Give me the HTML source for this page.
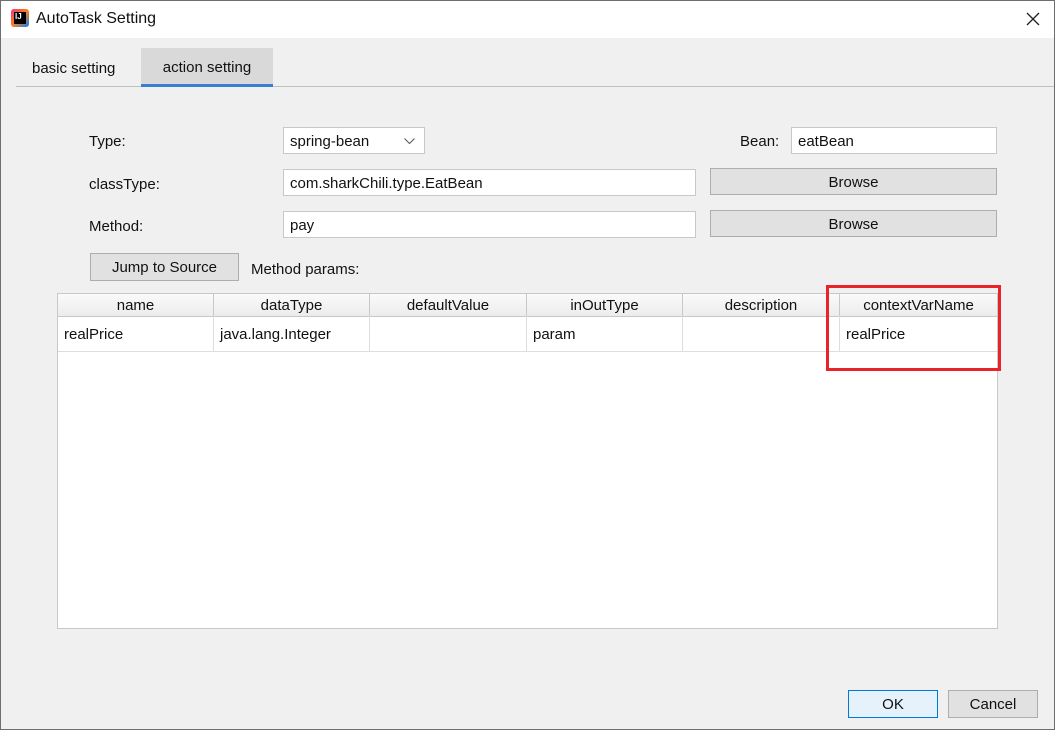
<!DOCTYPE html><html><head><style>
*{margin:0;padding:0;box-sizing:border-box}
body{width:1055px;height:730px;position:relative;background:#f0f0f0;font-family:"Liberation Sans","Noto Sans CJK SC",sans-serif;font-size:15px;color:#111;overflow:hidden}
.a{position:absolute}
.inp{position:absolute;background:#fff;border:1px solid #c8c8c8;padding-left:6px;line-height:27px}
.btn{position:absolute;background:#e1e1e1;border:1px solid #adadad;text-align:center}
.th{position:absolute;top:0;height:22px;line-height:24px;text-align:center;border-right:1px solid #c8c8c8;background:linear-gradient(#fafafa,#ececec)}
.td{position:absolute;top:22px;height:36px;line-height:38px;padding-left:6px;border-right:1px solid #ddd;border-bottom:1px solid #ddd}
</style></head><body>
<div class="a" style="left:0;top:0;width:1055px;height:730px;border:1px solid #6e6e6e;z-index:5;pointer-events:none"></div>
<div class="a" style="left:0;top:0;width:1055px;height:38px;background:#fff"></div>
<div class="a" style="left:11px;top:9px;width:18px;height:18px;background:linear-gradient(135deg,#f5317f,#fc801d 50%,#087cfa);border-radius:3px"></div>
<div class="a" style="left:14px;top:12px;width:12px;height:12px;background:#000;color:#fff;font-size:8px;line-height:9px;font-weight:bold;padding-left:1px">IJ</div>
<div class="a" style="left:36px;top:10px;font-size:16px">AutoTask Setting</div>
<svg class="a" style="left:1026px;top:12px" width="14" height="14"><path d="M1 1L13 13M13 1L1 13" stroke="#222" stroke-width="1.3"/></svg>
<div class="a" style="left:16px;top:86px;width:1039px;height:1px;background:#c0c0c0"></div>
<div class="a" style="left:32px;top:60px">basic setting</div>
<div class="a" style="left:141px;top:48px;width:132px;height:39px;background:#d9d9d9;border-bottom:3px solid #3c7fcf;text-align:center;line-height:40px">action setting</div>
<div class="a" style="left:89px;top:133px">Type:</div>
<div class="a" style="left:89px;top:176px">classType:</div>
<div class="a" style="left:89px;top:218px">Method:</div>
<div class="inp" style="left:283px;top:127px;width:142px;height:27px">spring-bean<svg style="position:absolute;right:9px;top:10px" width="11" height="7"><path d="M0.5 0.5L5.5 5.5L10.5 0.5" stroke="#555" fill="none"/></svg></div>
<div class="a" style="left:740px;top:133px">Bean:</div>
<div class="inp" style="left:791px;top:127px;width:206px;height:27px">eatBean</div>
<div class="inp" style="left:283px;top:169px;width:413px;height:27px">com.sharkChili.type.EatBean</div>
<div class="inp" style="left:283px;top:211px;width:413px;height:27px">pay</div>
<div class="btn" style="left:710px;top:168px;width:287px;height:27px;line-height:27px">Browse</div>
<div class="btn" style="left:710px;top:210px;width:287px;height:27px;line-height:27px">Browse</div>
<div class="btn" style="left:90px;top:253px;width:149px;height:28px;line-height:28px">Jump to Source</div>
<div class="a" style="left:251px;top:261px">Method params:</div>
<div class="a" style="left:57px;top:293px;width:941px;height:336px;background:#fff;border:1px solid #c8c8c8">
<div class="th" style="left:0;width:156px">name</div>
<div class="th" style="left:156px;width:156px">dataType</div>
<div class="th" style="left:312px;width:157px">defaultValue</div>
<div class="th" style="left:469px;width:156px">inOutType</div>
<div class="th" style="left:625px;width:157px">description</div>
<div class="th" style="left:782px;width:157px;border-right:none">contextVarName</div>
<div class="a" style="left:0;top:22px;width:939px;height:1px;background:#c8c8c8"></div>
<div class="td" style="left:0;width:156px">realPrice</div>
<div class="td" style="left:156px;width:156px">java.lang.Integer</div>
<div class="td" style="left:312px;width:157px"></div>
<div class="td" style="left:469px;width:156px">param</div>
<div class="td" style="left:625px;width:157px"></div>
<div class="td" style="left:782px;width:157px;border-right:none">realPrice</div>
</div>
<div class="a" style="left:826px;top:285px;width:175px;height:86px;border:3px solid #e8232a"></div>
<div class="btn" style="left:848px;top:690px;width:90px;height:28px;line-height:28px;background:#e5f1fb;border-color:#0078d7">OK</div>
<div class="btn" style="left:948px;top:690px;width:90px;height:28px;line-height:28px">Cancel</div>
</body></html>
